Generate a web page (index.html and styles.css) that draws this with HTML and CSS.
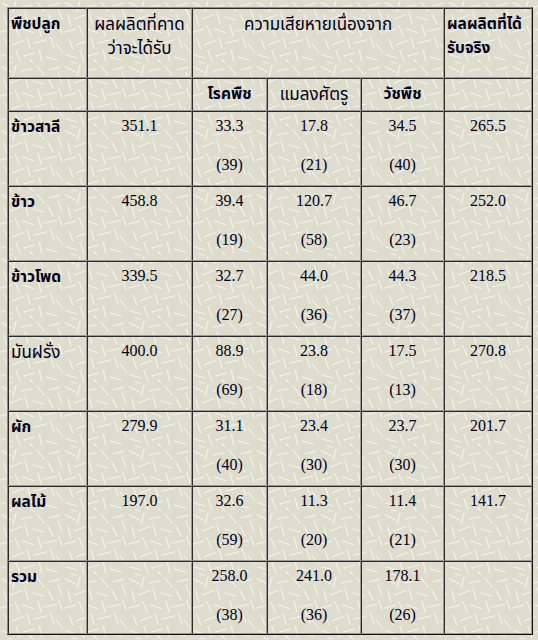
FILE: index.html
```html
<!DOCTYPE html>
<html lang="th">
<head>
<meta charset="utf-8">
<title>ความเสียหายของพืชปลูก</title>
<link rel="stylesheet" href="styles.css">
</head>
<body>
<table class="loss">
  <colgroup>
    <col class="c1"><col class="c2"><col class="c3"><col class="c4"><col class="c5"><col class="c6">
  </colgroup>
  <tr class="h1">
    <td class="th b left">พืชปลูก</td>
    <td class="th center">ผลผลิตที่คาด<br>ว่าจะได้รับ</td>
    <td class="th center" colspan="3">ความเสียหายเนื่องจาก</td>
    <td class="th b left">ผลผลิตที่ได้<br>รับจริง</td>
  </tr>
  <tr class="h2">
    <td></td>
    <td></td>
    <td class="th b center">โรคพืช</td>
    <td class="th center">แมลงศัตรู</td>
    <td class="th b center">วัชพืช</td>
    <td></td>
  </tr>
  <tr class="row">
    <td class="th b left">ข้าวสาลี</td>
    <td class="num"><div class="v">351.1</div></td>
    <td class="num"><div class="v">33.3</div><div class="p">(39)</div></td>
    <td class="num"><div class="v">17.8</div><div class="p">(21)</div></td>
    <td class="num"><div class="v">34.5</div><div class="p">(40)</div></td>
    <td class="num"><div class="v">265.5</div></td>
  </tr>
  <tr class="row">
    <td class="th b left">ข้าว</td>
    <td class="num"><div class="v">458.8</div></td>
    <td class="num"><div class="v">39.4</div><div class="p">(19)</div></td>
    <td class="num"><div class="v">120.7</div><div class="p">(58)</div></td>
    <td class="num"><div class="v">46.7</div><div class="p">(23)</div></td>
    <td class="num"><div class="v">252.0</div></td>
  </tr>
  <tr class="row">
    <td class="th b left">ข้าวโพด</td>
    <td class="num"><div class="v">339.5</div></td>
    <td class="num"><div class="v">32.7</div><div class="p">(27)</div></td>
    <td class="num"><div class="v">44.0</div><div class="p">(36)</div></td>
    <td class="num"><div class="v">44.3</div><div class="p">(37)</div></td>
    <td class="num"><div class="v">218.5</div></td>
  </tr>
  <tr class="row">
    <td class="th left">มันฝรั่ง</td>
    <td class="num"><div class="v">400.0</div></td>
    <td class="num"><div class="v">88.9</div><div class="p">(69)</div></td>
    <td class="num"><div class="v">23.8</div><div class="p">(18)</div></td>
    <td class="num"><div class="v">17.5</div><div class="p">(13)</div></td>
    <td class="num"><div class="v">270.8</div></td>
  </tr>
  <tr class="row">
    <td class="th b left">ผัก</td>
    <td class="num"><div class="v">279.9</div></td>
    <td class="num"><div class="v">31.1</div><div class="p">(40)</div></td>
    <td class="num"><div class="v">23.4</div><div class="p">(30)</div></td>
    <td class="num"><div class="v">23.7</div><div class="p">(30)</div></td>
    <td class="num"><div class="v">201.7</div></td>
  </tr>
  <tr class="row">
    <td class="th b left">ผลไม้</td>
    <td class="num"><div class="v">197.0</div></td>
    <td class="num"><div class="v">32.6</div><div class="p">(59)</div></td>
    <td class="num"><div class="v">11.3</div><div class="p">(20)</div></td>
    <td class="num"><div class="v">11.4</div><div class="p">(21)</div></td>
    <td class="num"><div class="v">141.7</div></td>
  </tr>
  <tr class="row last">
    <td class="th b left">รวม</td>
    <td class="num"></td>
    <td class="num"><div class="v">258.0</div><div class="p">(38)</div></td>
    <td class="num"><div class="v">241.0</div><div class="p">(36)</div></td>
    <td class="num"><div class="v">178.1</div><div class="p">(26)</div></td>
    <td class="num"></td>
  </tr>
</table>
</body>
</html>
```
FILE: styles.css
```css
html, body {
  margin: 0;
  padding: 0;
}
body {
  padding: 7px;
  background-color: #dedccd;
  background-image: url("data:image/svg+xml;utf8,<svg xmlns='http://www.w3.org/2000/svg' width='64' height='64'><g stroke='%23f4f4ec' stroke-width='1.1' stroke-linecap='round' fill='none'><line x1='2' y1='3' x2='11' y2='8'/><line x1='16' y1='1' x2='13' y2='12'/><line x1='21' y1='7' x2='32' y2='5'/><line x1='37' y1='2' x2='44' y2='11'/><line x1='49' y1='6' x2='60' y2='3'/><line x1='58' y1='9' x2='62' y2='19'/><line x1='4' y1='15' x2='7' y2='26'/><line x1='10' y1='19' x2='21' y2='15'/><line x1='25' y1='12' x2='28' y2='23'/><line x1='33' y1='17' x2='44' y2='20'/><line x1='48' y1='14' x2='53' y2='24'/><line x1='1' y1='32' x2='12' y2='29'/><line x1='15' y1='26' x2='19' y2='36'/><line x1='23' y1='29' x2='34' y2='33'/><line x1='38' y1='25' x2='41' y2='36'/><line x1='45' y1='31' x2='57' y2='28'/><line x1='59' y1='24' x2='62' y2='34'/><line x1='5' y1='39' x2='9' y2='49'/><line x1='12' y1='45' x2='23' y2='41'/><line x1='27' y1='38' x2='30' y2='48'/><line x1='34' y1='43' x2='46' y2='40'/><line x1='50' y1='37' x2='54' y2='47'/><line x1='56' y1='44' x2='63' y2='52'/><line x1='2' y1='55' x2='13' y2='58'/><line x1='16' y1='51' x2='20' y2='61'/><line x1='24' y1='56' x2='35' y2='53'/><line x1='39' y1='50' x2='42' y2='61'/><line x1='46' y1='57' x2='57' y2='60'/><line x1='30' y1='60' x2='33' y2='63'/><line x1='8' y1='62' x2='12' y2='63'/></g></svg>");
  font-family: "Noto Sans Thai", Tahoma, "Noto Sans", sans-serif;
  color: #00001a;
}
.loss {
  width: 526px;
  table-layout: fixed;
  border-collapse: separate;
  border-spacing: 0;
  border-top: 1px solid #8a8a8a;
  border-left: 1px solid #8a8a8a;
  border-right: 1px solid #111;
  border-bottom: 1px solid #111;
}
.c1 { width: 79px; }
.c2 { width: 105px; }
.c3 { width: 75px; }
.c4 { width: 94px; }
.c5 { width: 83px; }
.c6 { width: 88px; }
.loss td {
  border-top: 1px solid #2a2a2a;
  border-left: 1px solid #2a2a2a;
  border-right: 1px solid #9a9a9a;
  border-bottom: 1px solid #9a9a9a;
  vertical-align: top;
  padding: 4px 2px 0 2px;
  font-size: 17px;
}
.h1 { height: 70px; }
.h2 { height: 33px; }
.h2 td { vertical-align: middle; padding-top: 0; }
.row { height: 75px; }
.row.last { height: 73px; }
.th { line-height: 24px; padding-top: 5px; }
.b { font-weight: bold; font-size: 15.5px; }
.loss td.b { font-size: 15.5px; }
.left { text-align: left; }
.center { text-align: center; }
.loss td.num {
  text-align: center;
  font-size: 16px;
  line-height: 20px;
}
.v, .p {
  font-family: "Liberation Serif", "Times New Roman", serif;
}
.v { margin: 0; }
.p { margin-top: 19px; }
```
